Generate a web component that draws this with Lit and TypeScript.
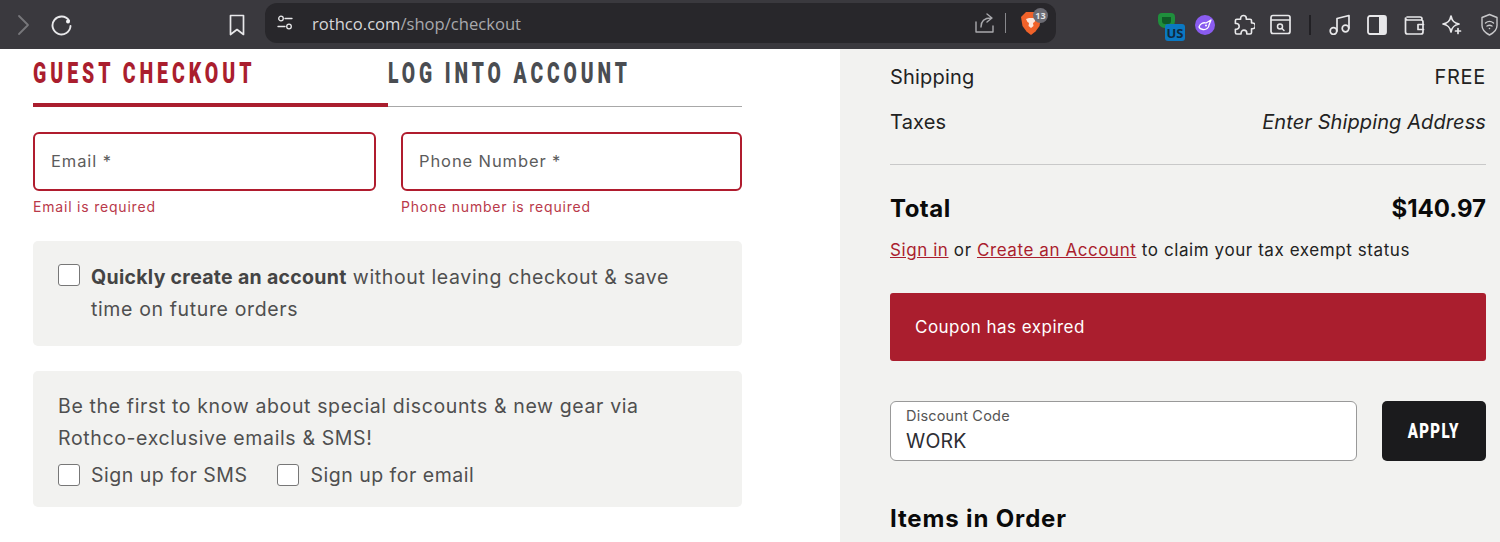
import { LitElement, html, css, svg } from "lit";
import { customElement } from "lit/decorators.js";

const ic = (w: number, h: number, body: unknown, cls = "") =>
  html`<svg class="ic ${cls}" width=${w} height=${h} viewBox="0 0 ${w} ${h}" fill="none" stroke="#e8e8ea" stroke-width="1.8" stroke-linecap="round" stroke-linejoin="round">${body}</svg>`;

@customElement("app-root")
export class AppRoot extends LitElement {
  static styles = css`
    :host { display: block; width: 1500px; height: 542px; overflow: hidden; font-family: "Inter", "Open Sans", sans-serif; color: #4a4a4a; background: #fff; }
    * { box-sizing: border-box; }
    .ic { display: block; flex: none; }
    .bar { height: 49px; background: #3a393e; display: flex; align-items: center; }
    .back { margin-left: 16px; }
    .reload { margin-left: 20px; }
    .bookmark { margin-left: 157px; }
    .url { margin-left: 20px; width: 791px; height: 40px; align-self: flex-start; margin-top: 3px; background: #28272b; border-radius: 12px; display: flex; align-items: center; padding-left: 12px; }
    .url-text { margin-left: 19px; font: 16.6px "Open Sans", sans-serif; color: #d6d6d8; flex: 1; }
    .url-text span { color: #a9a9ad; }
    .sep { width: 1.5px; height: 20px; background: #88888c; margin: 0 15px 0 9px; }
    .brave { position: relative; width: 35px; height: 24px; }
    .count { position: absolute; left: 12px; top: -3px; width: 15px; height: 15px; border-radius: 50%; background: #6b6b73; color: #e4e4e6; font: 700 9px "Open Sans", sans-serif; display: flex; align-items: center; justify-content: center; }
    .tools { margin-left: 102px; display: flex; align-items: center; }
    .us { position: relative; width: 27px; height: 28px; margin: 5px 10px 0 0; }
    .us b { position: absolute; left: 7px; top: 11px; width: 20px; height: 17px; border-radius: 3px; background: #0a78c2; color: #0e2a40; font: 700 13px "Open Sans", sans-serif; display: flex; align-items: center; justify-content: center; }
    .us i { position: absolute; left: 0; top: 0; width: 17px; height: 15px; border-radius: 4px 4px 7px 7px; border: 4px solid #1f8f3c; background: #0f5a26; }
    .m15 { margin-left: 15px; }
    .m16 { margin-left: 16px; }
    .m17 { margin-left: 17px; }
    .m18 { margin-left: 18px; }
    .divider { width: 2px; height: 20px; background: #212024; margin-left: 18px; }
    .main { display: flex; height: 493px; }
    .left { width: 840px; padding-left: 33px; background: #fff; }
    .col { width: 709px; }
    .tabs { display: flex; height: 58px; border-bottom: 1px solid #a8a8a8; }
    .tab { position: relative; font-family: "Roboto", sans-serif; font-weight: 900; font-size: 29px; line-height: 49px; color: #4a4d52; flex: 1; }
    .tab span { display: inline-block; white-space: nowrap; letter-spacing: 5.9px; transform: scaleX(.665); transform-origin: left center; }
    .tab.on { width: 355px; flex: none; color: #aa1e2e; }
    .tab.on span { transform: scaleX(.672); }
    .tab.on::after { content: ""; position: absolute; left: 0; right: 0; bottom: -1px; height: 4px; background: #aa1e2e; }
    .fields { display: grid; grid-template-columns: 343px 341px; gap: 25px; margin-top: 25px; }
    .box { height: 59px; border: 2px solid #b01c2e; border-radius: 6px; display: flex; align-items: center; padding: 0 15px 1px 16px; font-size: 16.5px; color: #5c5c5c; letter-spacing: .9px; }
    .err { margin-top: 7px; font-size: 14px; line-height: 17px; color: #b9394a; letter-spacing: .8px; }
    .panel { background: #f2f2f0; border-radius: 5px; padding: 20px 25px; font-size: 19.5px; line-height: 32px; letter-spacing: .63px; color: #4f4f4f; }
    .p1 { margin-top: 26px; height: 105px; display: flex; gap: 11px; }
    .p2 { margin-top: 25px; height: 136px; padding-top: 19px; }
    .check { flex: none; width: 22px; height: 22px; border: 1px solid #777; border-radius: 3px; background: #fff; margin-top: 3px; }
    .p1 strong { font-weight: 700; color: #444; letter-spacing: .3px; }
    .opts { display: flex; gap: 30px; margin-top: 5px; letter-spacing: .5px; }
    .opt { display: flex; gap: 11px; align-items: center; }
    .opt .check { margin: 0; }
    .right { width: 660px; background: #f2f2f0; padding: 0 14px 0 50px; color: #111; }
    .row { display: flex; justify-content: space-between; font-size: 20px; line-height: 28px; letter-spacing: .2px; color: #222; }
    .r1 { margin-top: 14px; }
    .free { letter-spacing: .7px; }
    .r2 { margin-top: 17px; padding-bottom: 28px; border-bottom: 1px solid #c9c9c9; }
    .r2 em { font-style: italic; letter-spacing: .1px; }
    .total { margin-top: 28px; font-size: 24px; line-height: 32px; font-weight: 700; color: #0a0a0a; letter-spacing: 0; }
    .claim { margin-top: 14px; font-size: 17px; line-height: 22px; color: #222; letter-spacing: .58px; }
    .claim a { color: #aa1e2e; text-decoration: underline; }
    .alert { margin-top: 32px; height: 68px; border-radius: 3px; background: #aa1e2e; color: #fff; font-size: 17px; letter-spacing: .48px; display: flex; align-items: center; padding-left: 25px; }
    .disc { display: flex; gap: 25px; margin-top: 40px; }
    .input { flex: 1; height: 60px; background: #fff; border: 1px solid #999; border-radius: 6px; padding: 5px 15px; }
    .lab { font-size: 14.5px; line-height: 18px; color: #555; letter-spacing: .2px; }
    .val { font-size: 19.5px; line-height: 26px; margin-top: 3px; color: #2d2d33; letter-spacing: .2px; }
    .apply { width: 104px; height: 60px; border-radius: 5px; background: #1b1b1d; color: #fff; font-family: "Roboto", sans-serif; font-weight: 900; font-size: 20px; letter-spacing: 1.8px; display: flex; align-items: center; justify-content: center; }
    .apply span { display: inline-block; transform: scaleX(.75); }
    .items { margin-top: 42px; font-size: 24px; line-height: 32px; font-weight: 700; color: #0a0a0a; letter-spacing: .85px; }
    .tot-l { letter-spacing: .5px; }
  `;

  render() {
    return html`
      <div class="bar">
        ${ic(14, 22, svg`<path d="M3 2l9 9-9 9" stroke="#77777b"/>`, "back")}
        ${ic(22, 22, svg`<path d="M19 6.500A9 9 0 1 0 20.500 12" stroke-width="1.900"/><circle cx="18" cy="7.500" r="2" fill="#f4f4f6" stroke="none"/>`, "reload")}
        ${ic(16, 22, svg`<path d="M1.500 1.500h13v19l-6.500-5-6.500 5z" stroke-width="1.700"/>`, "bookmark")}
        <div class="url">
          ${ic(16, 16, svg`<circle cx="4" cy="3.500" r="2.300" stroke-width="1.300"/><path d="M8 3.500h7M1 11.500h7" stroke-width="1.300"/><circle cx="12" cy="11.500" r="2.300" stroke-width="1.300"/>`)}
          <div class="url-text">rothco.com<span>/shop/checkout</span></div>
          ${ic(22, 22, svg`<path d="M2 10v10h17v-6M7 15c0-6 4-9 10-9M13 2l5 4-5 4" stroke="#a9a9ad" stroke-width="1.400"/>`)}
          <div class="sep"></div>
          <div class="brave">
            ${ic(20, 24, svg`<path d="M5 1h10l2.500 2.500L20 6l-1.500 9-4 5.500L10 24l-4.500-3.500-4-5.500L0 6l2.500-2.500z" fill="#f0622a" stroke="none"/><path d="M5 8l3-1h4l3 1-1.500 3-1.500 1 .5 3-2.500 2-2.500-2 .5-3-1.500-1z" fill="#fbe6dc" stroke="none"/>`)}
            <span class="count">13</span>
          </div>
        </div>
        <div class="tools">
          <div class="us"><i></i><b>US</b></div>
          ${ic(20, 20, svg`<circle cx="10" cy="10" r="10" fill="#8a5cf0" stroke="none"/><path d="M4 12c1-3 4-5 7-4l5-3-2 5c0 3-3 5-6 4.500-2-.3-3.500-1-4-2.500z" stroke="#fff" stroke-width="1.300"/><circle cx="11" cy="10.500" r="1" fill="#fff" stroke="none"/>`)}
          ${ic(22, 22, svg`<path d="M8 5V4a3 3 0 0 1 6 0v1h4a1.500 1.500 0 0 1 1.500 1.500V9h1a3 3 0 0 1 0 6h-1v4a1.500 1.500 0 0 1-1.500 1.500h-3.500v-1a3 3 0 0 0-6 0v1H4A1.500 1.500 0 0 1 2.500 19v-3.500h1a3 3 0 0 0 0-6h-1V6.500A1.500 1.500 0 0 1 4 5z" transform="translate(0 .5) scale(.95)" stroke-width="1.700"/>`, "m18")}
          ${ic(21, 21, svg`<rect x="1" y="1.500" width="19" height="18" rx="2" stroke-width="1.700"/><path d="M1.500 6h18" stroke-width="1.700"/><circle cx="10" cy="12.500" r="2.500" stroke-width="1.500"/><path d="M12 14.500l2 2" stroke-width="1.500"/>`, "m15")}
          <div class="divider"></div>
          ${ic(22, 21, svg`<path d="M8 17V4.500l12-3V14" stroke-width="1.700"/><circle cx="4.500" cy="17" r="3.300" stroke-width="1.700"/><circle cx="16.500" cy="14.500" r="3.300" stroke-width="1.700"/>`, "m18")}
          ${ic(20, 20, svg`<rect x="1" y="1" width="18" height="18" rx="2"/><rect x="12" y="1.500" width="7" height="17" fill="#e8e8ea" stroke="none"/>`, "m16")}
          ${ic(21, 20, svg`<path d="M3 2h13a2 2 0 0 1 2 2M1.500 5v12a2 2 0 0 0 2 2H17a2 2 0 0 0 2-2V7a2 2 0 0 0-2-2H3.500a2 2 0 0 1-2-2v2z" stroke-width="1.700"/><path d="M19.500 9.500H14v5h5.500" stroke-width="1.700"/>`, "m17")}
          ${ic(20, 21, svg`<path d="M9 2c1 5 3 7 8 8-5 1-7 3-8 8-1-5-3-7-8-8 5-1 7-3 8-8z" stroke-width="1.700"/><path d="M16 14.500v5M13.500 17h5" stroke-width="1.700"/>`, "m17")}
          ${ic(19, 23, svg`<path d="M9.500 1.500l7.500 3v8c0 4.500-3.500 7.500-7.500 9.500C5.500 20 2 17 2 12.500v-8z" stroke-width="1.400" stroke="#c8c8ca"/><path d="M5.500 10c2.500-2 5.500-2 8 0M7 13c1.500-1 3.500-1 5 0" stroke-width="1.400" stroke="#c8c8ca"/><circle cx="9.500" cy="15.500" r=".8" fill="#c8c8ca" stroke="none"/>`, "m18")}
        </div>
      </div>
      <div class="main">
        <div class="left">
          <div class="col">
            <div class="tabs">
              <div class="tab on"><span>GUEST CHECKOUT</span></div>
              <div class="tab"><span>LOG INTO ACCOUNT</span></div>
            </div>
            <div class="fields">
              <div>
                <div class="box">Email *</div>
                <div class="err">Email is required</div>
              </div>
              <div>
                <div class="box">Phone Number *</div>
                <div class="err">Phone number is required</div>
              </div>
            </div>
            <div class="panel p1">
              <div class="check"></div>
              <div><strong>Quickly create an account</strong> without leaving checkout &amp; save<br />time on future orders</div>
            </div>
            <div class="panel p2">
              <div>Be the first to know about special discounts &amp; new gear via<br />Rothco-exclusive emails &amp; SMS!</div>
              <div class="opts">
                <div class="opt"><div class="check"></div>Sign up for SMS</div>
                <div class="opt"><div class="check"></div>Sign up for email</div>
              </div>
            </div>
          </div>
        </div>
        <div class="right">
          <div class="row r1"><span>Shipping</span><span class="free">FREE</span></div>
          <div class="row r2"><span>Taxes</span><em>Enter Shipping Address</em></div>
          <div class="row total"><span class="tot-l">Total</span><span>$140.97</span></div>
          <div class="claim"><a>Sign in</a> or <a>Create an Account</a> to claim your tax exempt status</div>
          <div class="alert">Coupon has expired</div>
          <div class="disc">
            <div class="input"><div class="lab">Discount Code</div><div class="val">WORK</div></div>
            <div class="apply"><span>APPLY</span></div>
          </div>
          <div class="items">Items in Order</div>
        </div>
      </div>
    `;
  }
}
